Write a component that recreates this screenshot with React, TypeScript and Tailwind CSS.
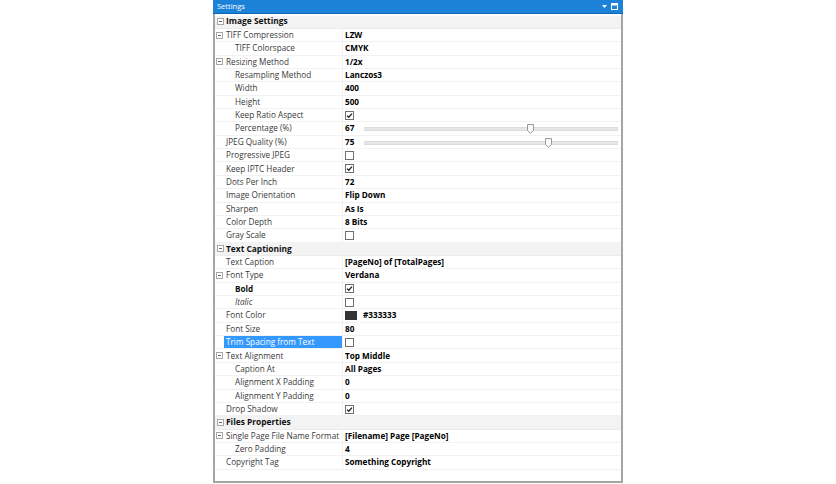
import React from "react";

type Row =
  | { kind: "section"; label: string }
  | {
      kind: "prop";
      label: string;
      level: number;
      expander?: boolean;
      value?: string;
      check?: boolean;
      slider?: number;
      color?: string;
      labelStyle?: "bold" | "italic";
      selected?: boolean;
    };

const rows: Row[] = [
  { kind: "section", label: "Image Settings" },
  { kind: "prop", label: "TIFF Compression", level: 0, expander: true, value: "LZW" },
  { kind: "prop", label: "TIFF Colorspace", level: 1, value: "CMYK" },
  { kind: "prop", label: "Resizing Method", level: 0, expander: true, value: "1/2x" },
  { kind: "prop", label: "Resampling Method", level: 1, value: "Lanczos3" },
  { kind: "prop", label: "Width", level: 1, value: "400" },
  { kind: "prop", label: "Height", level: 1, value: "500" },
  { kind: "prop", label: "Keep Ratio Aspect", level: 1, check: true },
  { kind: "prop", label: "Percentage (%)", level: 1, value: "67", slider: 0.652 },
  { kind: "prop", label: "JPEG Quality (%)", level: 0, value: "75", slider: 0.723 },
  { kind: "prop", label: "Progressive JPEG", level: 0, check: false },
  { kind: "prop", label: "Keep IPTC Header", level: 0, check: true },
  { kind: "prop", label: "Dots Per Inch", level: 0, value: "72" },
  { kind: "prop", label: "Image Orientation", level: 0, value: "Flip Down" },
  { kind: "prop", label: "Sharpen", level: 0, value: "As Is" },
  { kind: "prop", label: "Color Depth", level: 0, value: "8 Bits" },
  { kind: "prop", label: "Gray Scale", level: 0, check: false },
  { kind: "section", label: "Text Captioning" },
  { kind: "prop", label: "Text Caption", level: 0, value: "[PageNo] of [TotalPages]" },
  { kind: "prop", label: "Font Type", level: 0, expander: true, value: "Verdana" },
  { kind: "prop", label: "Bold", level: 1, check: true, labelStyle: "bold" },
  { kind: "prop", label: "Italic", level: 1, check: false, labelStyle: "italic" },
  { kind: "prop", label: "Font Color", level: 0, color: "#333333" },
  { kind: "prop", label: "Font Size", level: 0, value: "80" },
  { kind: "prop", label: "Trim Spacing from Text", level: 0, check: false, selected: true },
  { kind: "prop", label: "Text Alignment", level: 0, expander: true, value: "Top Middle" },
  { kind: "prop", label: "Caption At", level: 1, value: "All Pages" },
  { kind: "prop", label: "Alignment X Padding", level: 1, value: "0" },
  { kind: "prop", label: "Alignment Y Padding", level: 1, value: "0" },
  { kind: "prop", label: "Drop Shadow", level: 0, check: true },
  { kind: "section", label: "Files Properties" },
  { kind: "prop", label: "Single Page File Name Format", level: 0, expander: true, value: "[Filename] Page [PageNo]" },
  { kind: "prop", label: "Zero Padding", level: 1, value: "4" },
  { kind: "prop", label: "Copyright Tag", level: 0, value: "Something Copyright" },
];

function Expander() {
  return (
    <svg width="7" height="7" viewBox="0 0 7 7" className="block">
      <rect x="0.5" y="0.5" width="6" height="6" fill="#fff" stroke="#a8a8a8" />
      <line x1="2" y1="3.5" x2="5" y2="3.5" stroke="#666" />
    </svg>
  );
}

function Check({ on }: { on: boolean }) {
  return (
    <svg width="9" height="9" viewBox="0 0 9 9" className="block">
      <rect x="0.5" y="0.5" width="8" height="8" fill="#fff" stroke="#707070" />
      {on && <path d="M2 4.6 L3.7 6.3 L7 2.6" fill="none" stroke="#222" strokeWidth="1.3" />}
    </svg>
  );
}

function Slider({ pos }: { pos: number }) {
  return (
    <div className="relative flex-1 h-full mr-[3px] ml-[10px]">
      <div className="absolute left-0 right-0 top-[5px] h-[4px] bg-[#e6e6e6] border border-[#dcdcdc]" />
      <svg
        width="7"
        height="10"
        viewBox="0 0 7 10"
        className="absolute top-[2px]"
        style={{ left: `calc(${pos * 100}% - 3px)` }}
      >
        <path d="M0.5 0.5 H6.5 V6.5 L3.5 9.3 L0.5 6.5 Z" fill="#fafafa" stroke="#9a9a9a" />
      </svg>
    </div>
  );
}

export default function App() {
  return (
    <div
      className="w-[836px] h-[484px] bg-white flex justify-center"
      style={{ fontFamily: '"Open Sans", "Noto Sans", sans-serif' }}
    >
      <div className="w-[410px] h-[483px] flex flex-col border-x-2 border-b-2 border-[#a5a5a5] bg-white">
        <div className="h-[14px] shrink-0 -mx-[2px] px-[4px] bg-[#1b82d8] flex items-center justify-between border-b border-[#0e66b8]">
          <span className="text-[7.5px] text-white leading-none">Settings</span>
          <div className="flex items-center gap-[4px] pr-[1px]">
            <svg width="5" height="4" viewBox="0 0 5 4" className="block">
              <path d="M0 0 H5 L2.5 3 Z" fill="#fff" />
            </svg>
            <svg width="7" height="7" viewBox="0 0 7 7" className="block">
              <rect x="0.5" y="0.5" width="6" height="6" fill="none" stroke="#fff" />
              <rect x="0.5" y="0.5" width="6" height="2" fill="#fff" />
            </svg>
          </div>
        </div>
        <div className="flex flex-col pt-[1.5px]">
          {rows.map((r, i) => {
            if (r.kind === "section") {
              return (
                <div key={i} className="h-[13.36px] flex items-center bg-[#f3f3f3] border-b border-[#ebebeb]">
                  <div className="w-[11px] flex justify-center pr-[2px] pl-[1px]">
                    <Expander />
                  </div>
                  <span className="text-[8.4px] font-bold text-[#111] leading-none">{r.label}</span>
                </div>
              );
            }
            return (
              <div key={i} className="h-[13.36px] flex items-center border-b border-[#f2f2f2]">
                <div className="w-[9px] flex justify-center">{r.expander && <Expander />}</div>
                <div
                  className={`w-[118px] h-full flex items-center pl-[2px] ${
                    r.selected ? "bg-[#3399ff] text-white" : "text-[#3a3a3a]"
                  }`}
                >
                  <span
                    className={`text-[8.2px] leading-none whitespace-nowrap ${r.level === 1 ? "pl-[9px]" : ""} ${
                      r.labelStyle === "bold" ? "font-bold text-[#111]" : ""
                    } ${r.labelStyle === "italic" ? "italic" : ""}`}
                  >
                    {r.label}
                  </span>
                </div>
                <div className="flex-1 h-full flex items-center pl-[2px] border-l border-[#f2f2f2]">
                  {r.check !== undefined && <Check on={r.check} />}
                  {r.color && (
                    <>
                      <div className="w-[12px] h-[9px] bg-[#333333]" />
                      <span className="ml-[6px] text-[8.2px] font-bold text-black leading-none">{r.color}</span>
                    </>
                  )}
                  {r.value && (
                    <span className="text-[8.2px] font-bold text-black leading-none whitespace-nowrap">{r.value}</span>
                  )}
                  {r.slider !== undefined && <Slider pos={r.slider} />}
                </div>
              </div>
            );
          })}
        </div>
      </div>
    </div>
  );
}
